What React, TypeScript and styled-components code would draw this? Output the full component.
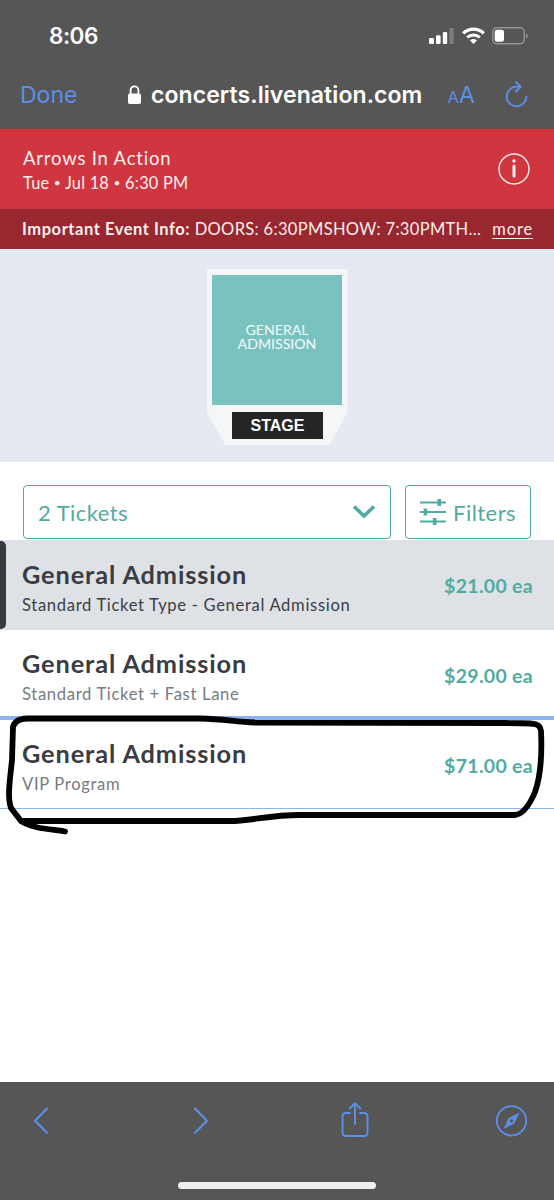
import React from "react";
import styled, { createGlobalStyle } from "styled-components";

const blue = "#5b8fe8";
const teal = "#50aca0";

const Global = createGlobalStyle`
  * { box-sizing: border-box; }
  body { margin: 0; background: #fff; }
  button { border: 0; background: none; padding: 0; margin: 0; font: inherit; color: inherit; display: flex; }
  svg { display: block; flex: none; }
`;

const Screen = styled.div`
  position: relative;
  width: 554px;
  height: 1200px;
  overflow: hidden;
  display: flex;
  flex-direction: column;
  background: #fff;
  font-family: "Lato", sans-serif;
`;

const Chrome = styled.header`
  height: 129px;
  flex: none;
  background: #565656;
  border-bottom: 1px solid #74484b;
  color: #fff;
  font-family: "Inter", sans-serif;
`;

const StatusBar = styled.div`
  height: 60px;
  padding: 11px 26px 0 49px;
  display: flex;
  align-items: center;
  justify-content: space-between;
`;

const Time = styled.span`
  font-size: 22.5px;
  font-weight: 600;
  line-height: 28px;
  letter-spacing: -0.5px;
`;

const StatusIcons = styled.div`
  display: flex;
  align-items: center;
  gap: 7.5px;
`;

const AddressBar = styled.div`
  height: 69px;
  padding: 0 26px 0 20px;
  display: flex;
  align-items: center;
  font-size: 23px;
  line-height: 28px;
`;

const Done = styled.button`
  width: 107px;
  color: ${blue};
`;

const Url = styled.span`
  margin-left: 9px;
  width: 288px;
  margin-right: auto;
  font-weight: 600;
  font-size: 23px;
  letter-spacing: 0.08px;
  white-space: nowrap;
`;

const TextSize = styled.button`
  color: ${blue};
  align-items: baseline;
  margin-right: 30px;
  padding-top: 3px;
  font-size: 23.5px;
  small { font-size: 16.5px; }
`;

const EventHeader = styled.section`
  height: 80px;
  flex: none;
  padding: 0 24px 0 23px;
  display: flex;
  align-items: center;
  justify-content: space-between;
  background: #cf3640;
  color: #fdeeee;
`;

const EventSummary = styled.div`
  padding-top: 3px;
`;

const EventTitle = styled.div`
  font-size: 18.5px;
  line-height: 25px;
  letter-spacing: 0.8px;
`;

const EventDate = styled.div`
  display: flex;
  align-items: center;
  font-size: 16.3px;
  line-height: 24px;
  letter-spacing: 0.25px;
  white-space: pre;
`;

const Bullet = styled.span`
  font-size: 12px;
`;

const InfoBar = styled.section`
  height: 40px;
  flex: none;
  padding: 0 21px 0 22px;
  display: flex;
  align-items: center;
  justify-content: space-between;
  background: #98272f;
  color: #fdeeee;
  font-size: 16.5px;
  line-height: 24px;
  white-space: nowrap;
`;

const InfoText = styled.span`
  letter-spacing: 0.33px;
  b { font-weight: 700; letter-spacing: 0.55px; }
`;

const More = styled.a`
  text-decoration: underline;
  text-underline-offset: 3px;
  letter-spacing: 0.85px;
`;

const VenueMap = styled.section`
  height: 213px;
  flex: none;
  padding-top: 20px;
  display: flex;
  justify-content: center;
  background: #e6e9f1;
`;

const Floor = styled.div`
  width: 141px;
  height: 176px;
  padding-top: 6px;
  display: flex;
  flex-direction: column;
  align-items: center;
  gap: 7px;
  background: #f5f6f7;
  clip-path: polygon(0 0, 100% 0, 100% 143px, 123px 100%, 19px 100%, 0 143px);
`;

const Section = styled.div`
  width: 130px;
  height: 130px;
  padding-top: 48px;
  background: #7ac2c0;
  color: #f2fbfb;
  text-align: center;
  font-size: 14.2px;
  line-height: 14px;
  letter-spacing: -0.03px;
`;

const Stage = styled.div`
  width: 91px;
  height: 27px;
  background: #252525;
  color: #fff;
  font: bold 16px/28px "Liberation Sans", Arial, sans-serif;
  text-align: center;
  padding-left: 1px;
`;

const Controls = styled.section`
  height: 78px;
  flex: none;
  padding: 23px 23px 1px;
  display: flex;
  gap: 14px;
`;

const Control = styled.button<{ $width: number }>`
  width: ${(p) => p.$width}px;
  height: 54px;
  padding: 0 14px;
  align-items: center;
  justify-content: space-between;
  border: 1.5px solid ${teal};
  border-radius: 4px;
  color: ${teal};
  font-size: 22px;
  line-height: 28px;
  letter-spacing: 0.45px;
  span { padding-top: 2px; }
`;

const Ticket = styled.article<{ $selected?: boolean; $rule?: number }>`
  height: ${(p) => (p.$rule === 1 ? 89 : 90)}px;
  flex: none;
  padding: 0 21px 0 22px;
  display: flex;
  align-items: flex-start;
  justify-content: space-between;
  position: relative;
  background: ${(p) => (p.$selected ? "#dee1e5" : "#fff")};
  color: ${(p) => (p.$selected ? "#3b3f45" : "#757b82")};
  box-shadow: inset 0 -${(p) => p.$rule || 0}px #8db4ee;
  &::before {
    content: "";
    display: ${(p) => (p.$selected ? "block" : "none")};
    position: absolute;
    left: 0;
    top: 1px;
    width: 6px;
    height: 88px;
    border-radius: 0 5px 5px 0;
    background: #373a3e;
  }
`;

const TicketInfo = styled.div<{ $tight: boolean }>`
  padding-top: ${(p) => (p.$tight ? 17 : 18)}px;
`;

const TicketName = styled.div`
  color: #393c42;
  font-size: 25.3px;
  font-weight: 700;
  line-height: 32px;
  letter-spacing: 0.9px;
`;

const TicketType = styled.div`
  font-size: 16.6px;
  line-height: 28px;
  letter-spacing: 0.67px;
  padding-top: 1px;
`;

const Price = styled.div`
  color: ${teal};
  font-size: 19.5px;
  font-weight: 700;
  line-height: 26px;
  letter-spacing: 0.3px;
  padding-top: 33px;
`;

const Toolbar = styled.footer`
  margin-top: auto;
  height: 118px;
  flex: none;
  display: flex;
  flex-direction: column;
  align-items: center;
  background: #565656;
`;

const ToolbarActions = styled.nav`
  width: 100%;
  height: 99px;
  padding: 20px 26px 0 33px;
  display: grid;
  grid-template-columns: 160px 148px 154px 33px;
  align-items: start;
`;

const HomeIndicator = styled.div`
  width: 198px;
  height: 7px;
  margin-top: 1px;
  border-radius: 4px;
  background: #efefef;
`;

const Scribble = styled.svg`
  position: absolute;
  left: 0;
  top: 700px;
  pointer-events: none;
`;

const stroke = { fill: "none", strokeLinecap: "round", strokeLinejoin: "round" } as const;

const tickets = [
  { type: "Standard Ticket Type - General Admission", price: "$21.00 ea", selected: true, rule: 0 },
  { type: "Standard Ticket + Fast Lane", price: "$29.00 ea", selected: false, rule: 4 },
  { type: "VIP Program", price: "$71.00 ea", selected: false, rule: 1 },
];

export default function App() {
  return (
    <Screen>
      <Global />
      <Chrome>
        <StatusBar>
          <Time>8:06</Time>
          <StatusIcons>
            <svg width="25" height="18" viewBox="0 0 25 18" fill="#fff">
              <rect x="0" y="11" width="5" height="6" rx="1.2" />
              <rect x="7" y="8.3" width="4.6" height="8.7" rx="1.2" />
              <rect x="13.8" y="5" width="4.4" height="12" rx="1.2" />
              <rect x="20.3" y="1" width="4.4" height="16" rx="1.2" fill="#7b7b7b" />
            </svg>
            <svg width="23" height="18" viewBox="0 0 23 18" {...stroke} stroke="#fff" strokeLinecap="butt">
              <path d="M1.2 6.4C7 .8 16 .8 21.8 6.4" strokeWidth="3.3" />
              <path d="M5.2 10.4C8.8 7.1 14.2 7.1 17.8 10.4" strokeWidth="2.9" />
              <path d="M8 13.4Q11.5 10.6 15 13.4L11.5 17Z" fill="#fff" stroke="none" />
            </svg>
            <svg width="36" height="18" viewBox="0 0 36 18">
              <rect x=".8" y=".8" width="31.4" height="16" rx="4" fill="none" stroke="#949494" strokeWidth="1.4" />
              <rect x="2.7" y="2.8" width="9.3" height="12" rx="2.2" fill="#fff" />
              <path d="M34 6.3Q35.8 7.3 35.8 9Q35.8 10.7 34 11.5Z" fill="#949494" />
            </svg>
          </StatusIcons>
        </StatusBar>
        <AddressBar>
          <Done>Done</Done>
          <svg width="15" height="20" viewBox="0 0 15 20">
            <rect x="1" y="8.5" width="13" height="10.5" rx="1.8" fill="#fff" />
            <path d="M3.6 9V5.2a3.9 3.9 0 0 1 7.8 0V9" fill="none" stroke="#fff" strokeWidth="1.8" />
          </svg>
          <Url>concerts.livenation.com</Url>
          <TextSize><small>A</small>A</TextSize>
          <svg width="23" height="28" viewBox="0 0 23 28" {...stroke} stroke={blue} strokeWidth="1.8">
            <path d="M21.3 15.5A9.8 9.8 0 1 1 11.5 5.7h3.8M10.8 1l4.9 4.7-4.9 4.8" />
          </svg>
        </AddressBar>
      </Chrome>

      <EventHeader>
        <EventSummary>
          <EventTitle>Arrows In Action</EventTitle>
          <EventDate>Tue <Bullet>•</Bullet> Jul 18 <Bullet>•</Bullet> 6:30 PM</EventDate>
        </EventSummary>
        <svg width="32" height="32" viewBox="0 0 32 32" fill="none" stroke="#fdeeee">
          <circle cx="16" cy="16" r="15" strokeWidth="1.4" />
          <path d="M16 13v10" strokeWidth="3" strokeLinecap="round" />
          <circle cx="16" cy="8" r="1.7" fill="#fdeeee" stroke="none" />
        </svg>
      </EventHeader>
      <InfoBar>
        <InfoText><b>Important Event Info:</b> DOORS: 6:30PMSHOW: 7:30PMTH…</InfoText>
        <More>more</More>
      </InfoBar>

      <VenueMap>
        <Floor>
          <Section>GENERAL<br />ADMISSION</Section>
          <Stage>STAGE</Stage>
        </Floor>
      </VenueMap>

      <Controls>
        <Control $width={368}>
          <span>2 Tickets</span>
          <svg width="24" height="18" viewBox="0 0 24 18" fill="none" stroke={teal} strokeWidth="3.6">
            <path d="M2 3.5l10 9.5 10-9.5" />
          </svg>
        </Control>
        <Control $width={126}>
          <svg width="26" height="28" viewBox="0 0 26 28" fill="none" stroke={teal} strokeWidth="2.2">
            <path d="M0 4.5h26M0 14h26M0 23.5h26" />
            <path d="M19.3 1v7M5.4 10.5v7M14.7 20v7" strokeWidth="3.6" />
          </svg>
          <span>Filters</span>
        </Control>
      </Controls>

      {tickets.map((t) => (
        <Ticket key={t.type} $selected={t.selected} $rule={t.rule}>
          <TicketInfo $tight={t.rule > 0}>
            <TicketName>General Admission</TicketName>
            <TicketType>{t.type}</TicketType>
          </TicketInfo>
          <Price>{t.price}</Price>
        </Ticket>
      ))}

      <Scribble width="554" height="140" viewBox="0 700 554 140" {...stroke} stroke="#000" strokeWidth="5.8">
        <path d="M65 831.5C50 829 34 829 21 821L11 808C7 797 10 780 12 760L13 727Q15 719 27 718.5L200 718.5C225 719 235 722 255 722.5L505 723C530 724 540 721 541 731C542 752 541 775 535 792C530 804 524 814 515 815L300 815C270 815 250 821 230 821L22 821" />
      </Scribble>

      <Toolbar>
        <ToolbarActions>
          <button aria-label="Back">
            <svg width="17" height="38" viewBox="0 0 17 38" {...stroke} stroke={blue} strokeWidth="2.1">
              <path d="M14 6.5L2 18.7 14 30.8" />
            </svg>
          </button>
          <button aria-label="Forward">
            <svg width="17" height="38" viewBox="0 0 17 38" {...stroke} stroke={blue} strokeWidth="2.1">
              <path d="M2 6.5l12 12.2L2 30.8" />
            </svg>
          </button>
          <button aria-label="Share">
            <svg width="28" height="38" viewBox="0 0 28 38" {...stroke} stroke={blue} strokeWidth="1.9">
              <path d="M9 11H5Q1.5 11 1.5 14.5V30Q1.5 34 5 34H23Q26.5 34 26.5 30V14.5Q26.5 11 23 11H19M14 22V1.5M8.7 6.5L14 1.2l5.3 5.3" />
            </svg>
          </button>
          <button aria-label="Open in browser">
            <svg width="33" height="38" viewBox="0 0 33 38" fill="none">
              <circle cx="16.5" cy="18.8" r="14.7" stroke={blue} strokeWidth="1.8" />
              <path d="M24.5 10.5L19.3 21.5 8.5 27 13.7 16Z" fill={blue} />
              <circle cx="16.5" cy="18.8" r="1.6" fill="#565656" />
            </svg>
          </button>
        </ToolbarActions>
        <HomeIndicator />
      </Toolbar>
    </Screen>
  );
}
